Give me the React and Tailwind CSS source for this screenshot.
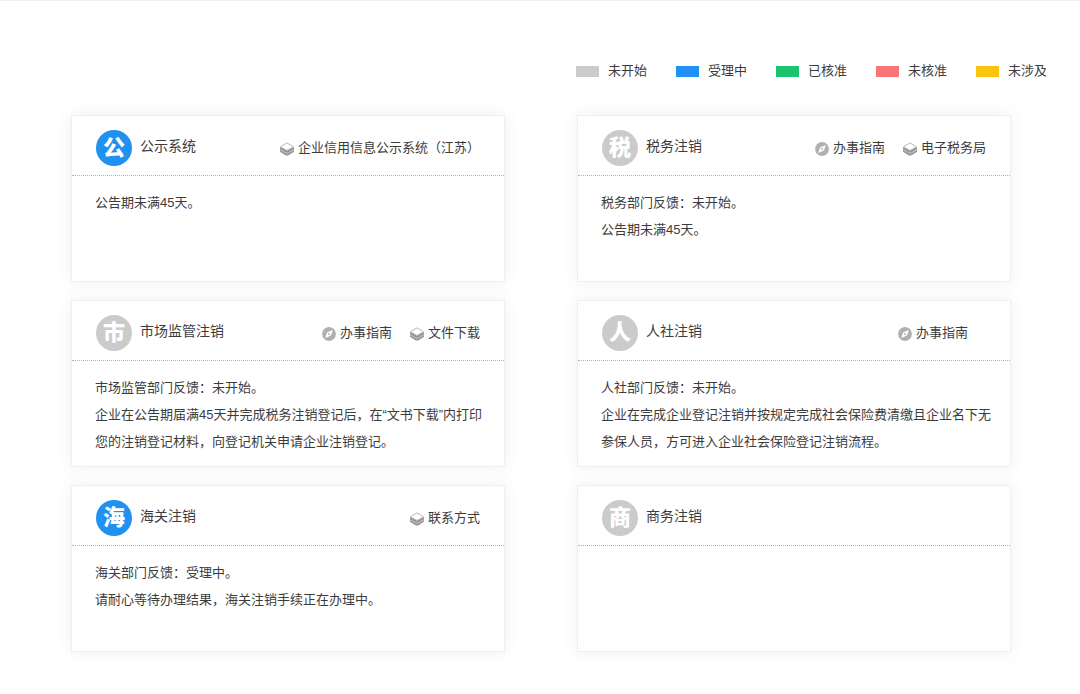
import React from 'react';

const legend = [
  { label: '未开始', color: 'bg-[#cbcbcb]' },
  { label: '受理中', color: 'bg-[#1f91f1]' },
  { label: '已核准', color: 'bg-[#1bc46e]' },
  { label: '未核准', color: 'bg-[#fa7575]' },
  { label: '未涉及', color: 'bg-[#fbc40c]' },
];

const cards = [
  {
    badge: '公',
    active: true,
    title: '公示系统',
    links: [{ icon: 'layers', label: '企业信用信息公示系统（江苏）' }],
    lines: ['公告期未满45天。'],
  },
  {
    badge: '税',
    title: '税务注销',
    links: [
      { icon: 'compass', label: '办事指南' },
      { icon: 'layers', label: '电子税务局' },
    ],
    lines: ['税务部门反馈：未开始。', '公告期未满45天。'],
  },
  {
    badge: '市',
    title: '市场监管注销',
    links: [
      { icon: 'compass', label: '办事指南' },
      { icon: 'layers', label: '文件下载' },
    ],
    lines: [
      '市场监管部门反馈：未开始。',
      '企业在公告期届满45天并完成税务注销登记后，在“文书下载”内打印您的注销登记材料，向登记机关申请企业注销登记。',
    ],
  },
  {
    badge: '人',
    title: '人社注销',
    inset: true,
    links: [{ icon: 'compass', label: '办事指南' }],
    lines: [
      '人社部门反馈：未开始。',
      '企业在完成企业登记注销并按规定完成社会保险费清缴且企业名下无参保人员，方可进入企业社会保险登记注销流程。',
    ],
  },
  {
    badge: '海',
    active: true,
    title: '海关注销',
    links: [{ icon: 'layers', label: '联系方式' }],
    lines: ['海关部门反馈：受理中。', '请耐心等待办理结果，海关注销手续正在办理中。'],
  },
  { badge: '商', title: '商务注销', links: [], lines: [] },
];

function LayersIcon() {
  return (
    <svg className="mt-0.5 h-3.5 w-3.5 shrink-0" viewBox="0 0 14 14" aria-hidden="true">
      <path d="M0 4.9 7 8.4l7-3.5v4.9l-5.4 3.4q-1.6.8-3.2 0L0 9.8Z" fill="#959595" />
      <path d="M0 7.7 5.6 10.8q1.4.7 2.8 0L14 7.7" fill="none" stroke="#d8d8d8" strokeWidth="0.8" />
      <path d="M7 .9 13.4 4.7 8 8q-1 .5-2 0L.6 4.7Z" fill="#fff" stroke="#b0b0b0" strokeWidth="0.9" strokeLinejoin="round" />
    </svg>
  );
}

function CompassIcon() {
  return (
    <svg className="mt-0.5 h-3.5 w-3.5 shrink-0" viewBox="0 0 14 14" aria-hidden="true">
      <circle cx="7" cy="7" r="6.9" fill="#b0b0b0" />
      <path d="M10.9 3 9 8.6 3.2 11.1 5.1 5.5Z" fill="#fff" />
      <circle cx="7" cy="7" r="0.9" fill="#b0b0b0" />
    </svg>
  );
}

function Card({ badge, active, title, links, lines, inset }) {
  return (
    <section className="min-h-[167px] border border-[#edf0f1] bg-white shadow-[0_0_15px_rgba(60,90,100,0.09)]">
      <header
        className={`flex h-[60px] items-center border-b border-dotted border-[#b4b4b4] pt-1 pl-6 ${inset ? 'pr-[42px]' : 'pr-6'}`}
      >
        <span
          className={`flex h-9 w-9 shrink-0 items-center justify-center rounded-full text-[22px] leading-9 font-black text-white ${active ? 'bg-[#1f91f1]' : 'bg-[#cbcbcb]'}`}
        >
          {badge}
        </span>
        <h2 className="ml-2 pb-1 text-[14px] leading-5">{title}</h2>
        <nav className="ml-auto flex gap-[18px]">
          {links.map((link) => (
            <a key={link.label} href="#" className="flex items-center gap-1 leading-5 whitespace-nowrap">
              {link.icon === 'layers' ? <LayersIcon /> : <CompassIcon />}
              {link.label}
            </a>
          ))}
        </nav>
      </header>
      <div className="pt-[13px] pr-3 pb-2 pl-[23px] leading-[27px]">
        {lines.map((line) => (
          <p key={line}>{line}</p>
        ))}
      </div>
    </section>
  );
}

export default function App() {
  return (
    <main
      lang="zh-CN"
      className="min-h-screen border-t border-[#f0f0f0] bg-white pb-10 font-['Liberation_Sans','Noto_Sans_CJK_SC',sans-serif] text-[13px] text-[#3c3c3c]"
    >
      <ul className="flex justify-end gap-[29px] pt-[60px] pr-[33px]">
        {legend.map((item) => (
          <li key={item.label} className="flex items-center gap-[9px] leading-5">
            <span className={`h-[11px] w-[23px] ${item.color}`} />
            {item.label}
          </li>
        ))}
      </ul>
      <div className="mt-[34px] grid grid-cols-2 gap-x-[72px] gap-y-[18px] pr-[69px] pl-[71px]">
        {cards.map((card) => (
          <Card key={card.title} {...card} />
        ))}
      </div>
    </main>
  );
}
